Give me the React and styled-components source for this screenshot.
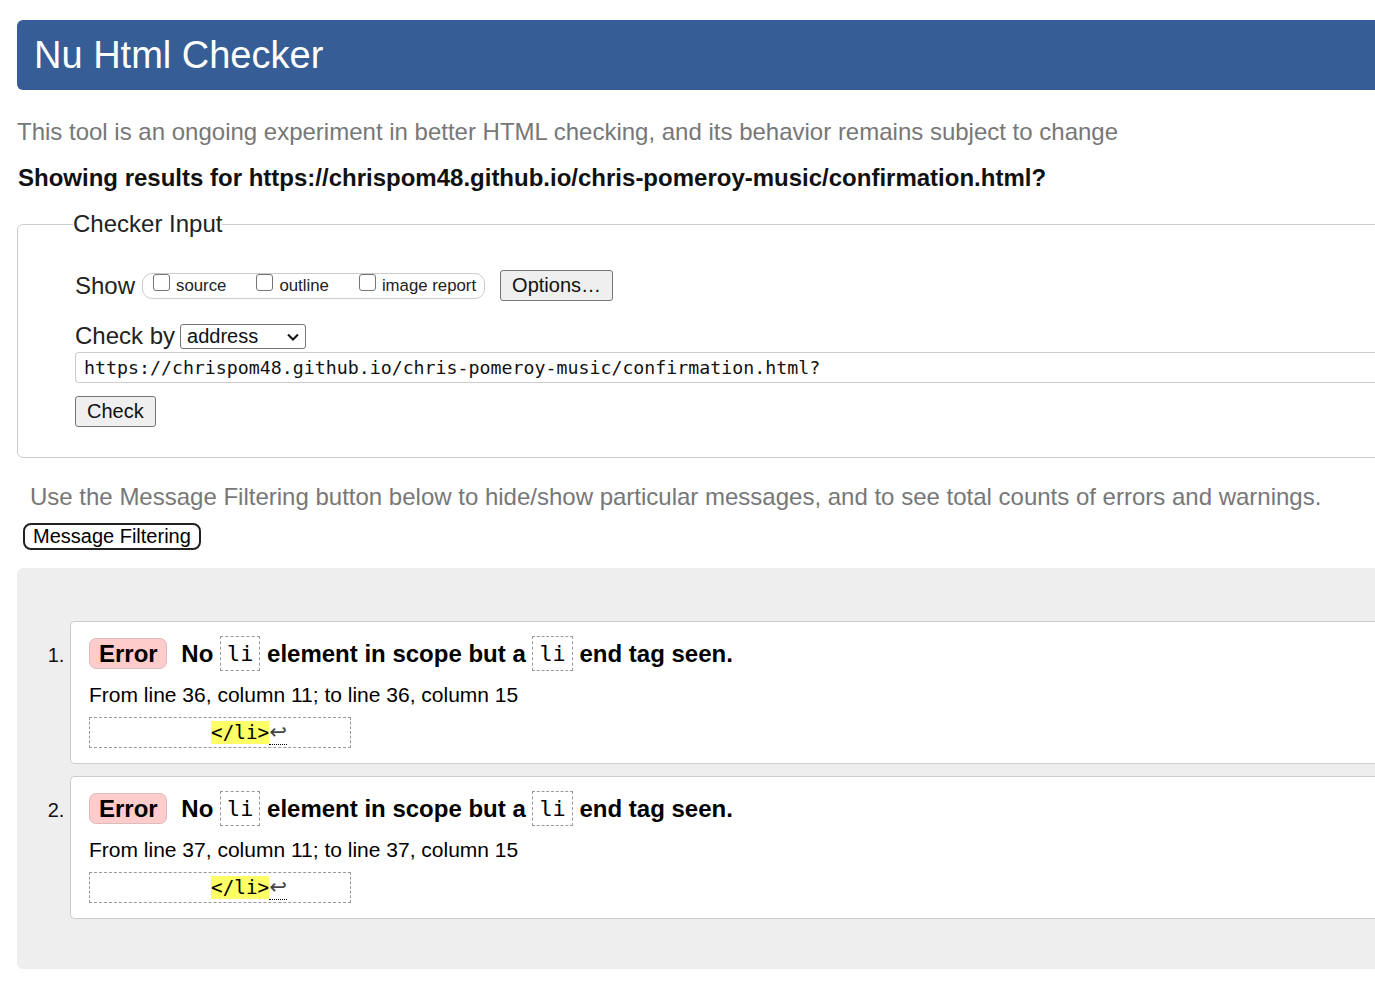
import React from 'react';
import styled, { createGlobalStyle } from 'styled-components';

const GlobalStyle = createGlobalStyle`
  html, body {
    margin: 0;
    padding: 0;
    background: #fff;
    overflow: hidden;
  }
  body {
    font-family: "Liberation Sans", Arial, sans-serif;
    color: #111;
  }
`;

const mono = `"DejaVu Sans Mono", "Liberation Mono", monospace`;

const Page = styled.div`
  width: 1420px;
  padding: 20px 0 20px 17px;
`;

const Header = styled.header`
  height: 70px;
  background: #365d95;
  border-radius: 6px 0 0 6px;
  display: flex;
  align-items: center;
  padding-left: 17px;
`;

const Title = styled.h1`
  margin: 0;
  font-size: 38px;
  font-weight: normal;
  color: #fff;
  line-height: 1;
`;

const Intro = styled.p`
  margin: ${p => p.$top || 0}px 0 0 ${p => p.$indent || 0}px;
  font-size: 24px;
  line-height: 28px;
  color: #777;
`;

const Results = styled.p`
  margin: 18px 0 0 1px;
  font-size: 24px;
  line-height: 28px;
  font-weight: bold;
  color: #111;
`;

const Fieldset = styled.fieldset`
  margin: 18px 0 0 0;
  padding: 0 0 30px 57px;
  border: 1px solid #ccc;
  border-radius: 6px 0 0 6px;
  min-width: 0;
`;

const Legend = styled.legend`
  padding: 0;
  margin-left: -2px;
  font-size: 24px;
  line-height: 28px;
  color: #222;
`;

const Row = styled.div`
  display: flex;
  align-items: center;
  height: ${p => p.$h}px;
  margin-top: ${p => p.$top}px;
`;

const Label = styled.span`
  font-size: 24px;
  line-height: 28px;
  color: #222;
  margin-right: ${p => p.$gap || 7}px;
`;

const ShowGroup = styled.span`
  display: inline-flex;
  align-items: center;
  height: 24px;
  padding: 0 8px 0 10px;
  border: 1px solid #ccc;
  border-radius: 10px;
`;

const CheckItem = styled.label`
  display: inline-flex;
  align-items: center;
  margin-right: ${p => p.$last ? 0 : 30}px;
  font-size: 16.8px;
  color: #222;
`;

const Box = styled.input.attrs({ type: 'checkbox' })`
  appearance: none;
  width: 17px;
  height: 17px;
  margin: -6px 6px 0 0;
  border: 1px solid #767676;
  border-radius: 3px;
  background: #fff;
`;

const Button = styled.button`
  height: 31px;
  padding: 0 11px;
  margin-left: ${p => p.$left || 0}px;
  font-family: "Liberation Sans", Arial, sans-serif;
  font-size: 20px;
  color: #111;
  background: #efefef;
  border: 1px solid #767676;
  border-radius: 3px;
`;

const SelectWrap = styled.span`
  position: relative;
  display: inline-block;
`;

const Select = styled.select`
  appearance: none;
  width: 126px;
  height: 25px;
  padding: 0 0 0 6px;
  font-family: "Liberation Sans", Arial, sans-serif;
  font-size: 20px;
  color: #111;
  background: #fff;
  border: 1px solid #767676;
  border-radius: 3px;
  display: block;
`;

const Chevron = styled.svg`
  position: absolute;
  right: 7px;
  top: 9px;
  pointer-events: none;
`;

const UrlInput = styled.input`
  display: block;
  box-sizing: border-box;
  width: 100%;
  height: 31px;
  margin-top: 2px;
  padding: 0 8px;
  font-family: ${mono};
  font-size: 18.25px;
  color: #111;
  border: 1px solid #ccc;
  border-right: none;
  border-radius: 4px 0 0 4px;
  outline: none;
`;

const FilterButton = styled.button`
  display: block;
  height: 27px;
  margin: 12px 0 0 6px;
  padding: 0 8px;
  font-family: "Liberation Sans", Arial, sans-serif;
  font-size: 20px;
  color: #000;
  background: #fff;
  border: 2px solid #222;
  border-radius: 8px;
`;

const Results2 = styled.div`
  margin-top: 18px;
  background: #eee;
  border-radius: 6px 0 0 6px;
  padding: 53px 0 50px 0;
`;

const List = styled.ol`
  margin: 0;
  padding-left: 53px;
  font-size: 20px;
  color: #111;
`;

const Card = styled.li`
  background: #fff;
  border: 1px solid #ccc;
  border-right: none;
  border-radius: 5px 0 0 5px;
  padding: 14px 0 15px 18px;
  margin-top: ${p => p.$first ? 0 : 12}px;
`;

const Heading = styled.p`
  margin: 0;
  font-size: 24px;
  font-weight: bold;
  line-height: 35px;
  color: #000;
`;

const Badge = styled.strong`
  display: inline-block;
  height: 29px;
  line-height: 29px;
  padding: 0 8px 0 9px;
  margin-right: 8px;
  background: #fcc;
  border: 1px solid #dcbcbc;
  border-radius: 7px;
  vertical-align: top;
  margin-top: 2px;
`;

const Code = styled.code`
  display: inline-block;
  height: 33px;
  line-height: 33px;
  padding: 0 6px;
  font-family: ${mono};
  font-size: 21.9px;
  font-weight: normal;
  border: 1px dashed #999;
  vertical-align: top;
`;

const Location = styled.p`
  margin: 12px 0 0 0;
  font-size: 21px;
  line-height: 24px;
  color: #000;
`;

const Extract = styled.p`
  display: inline-block;
  box-sizing: border-box;
  width: 262px;
  height: 31px;
  margin: 10px 0 0 0;
  padding: 0 5px;
  border: 1px dashed #999;
  font-family: ${mono};
  font-size: 19.3px;
  line-height: 30px;
  white-space: pre;
  color: #000;
`;

const Mark = styled.mark`
  background: #ff6;
  color: #000;
`;

const Lf = styled.span`
  font-family: "DejaVu Sans", sans-serif;
  font-size: 21px;
  line-height: 20px;
  color: #444;
  border-bottom: 1px dotted #000;
`;

const messages = [
  { from: 36, to: 36 },
  { from: 37, to: 37 },
];

export default function App() {
  return (
    <>
      <GlobalStyle />
      <Page>
        <Header>
          <Title>Nu Html Checker</Title>
        </Header>
        <Intro $top={28}>
          This tool is an ongoing experiment in better HTML checking, and its behavior remains subject to change
        </Intro>
        <Results>Showing results for https://chrispom48.github.io/chris-pomeroy-music/confirmation.html?</Results>

        <Fieldset>
          <Legend>Checker Input</Legend>
          <Row $h={31} $top={32}>
            <Label>Show</Label>
            <ShowGroup>
              <CheckItem><Box />source</CheckItem>
              <CheckItem><Box />outline</CheckItem>
              <CheckItem $last><Box />image report</CheckItem>
            </ShowGroup>
            <Button $left={15}>Options…</Button>
          </Row>
          <Row $h={28} $top={21}>
            <Label $gap={5}>Check by</Label>
            <SelectWrap>
              <Select defaultValue="address">
                <option value="address">address</option>
                <option value="file">file upload</option>
                <option value="text">text input</option>
              </Select>
              <Chevron width="12" height="8" viewBox="0 0 12 8">
                <path d="M1 1.5 L6 6.5 L11 1.5" fill="none" stroke="#111" strokeWidth="2" />
              </Chevron>
            </SelectWrap>
          </Row>
          <UrlInput readOnly value="https://chrispom48.github.io/chris-pomeroy-music/confirmation.html?" />
          <Row $h={31} $top={13}>
            <Button>Check</Button>
          </Row>
        </Fieldset>

        <Intro $top={25} $indent={13}>
          Use the Message Filtering button below to hide/show particular messages, and to see total counts of errors and warnings.
        </Intro>
        <FilterButton>Message Filtering</FilterButton>

        <Results2>
          <List>
            {messages.map((m, i) => (
              <Card key={i} $first={i === 0}>
                <Heading>
                  <Badge>Error</Badge> No <Code>li</Code> element in scope but a <Code>li</Code> end tag seen.
                </Heading>
                <Location>
                  From line {m.from}, column 11; to line {m.to}, column 15
                </Location>
                <Extract>{'          '}<Mark>{'</li>'}</Mark><Lf>↩</Lf></Extract>
              </Card>
            ))}
          </List>
        </Results2>
      </Page>
    </>
  );
}
